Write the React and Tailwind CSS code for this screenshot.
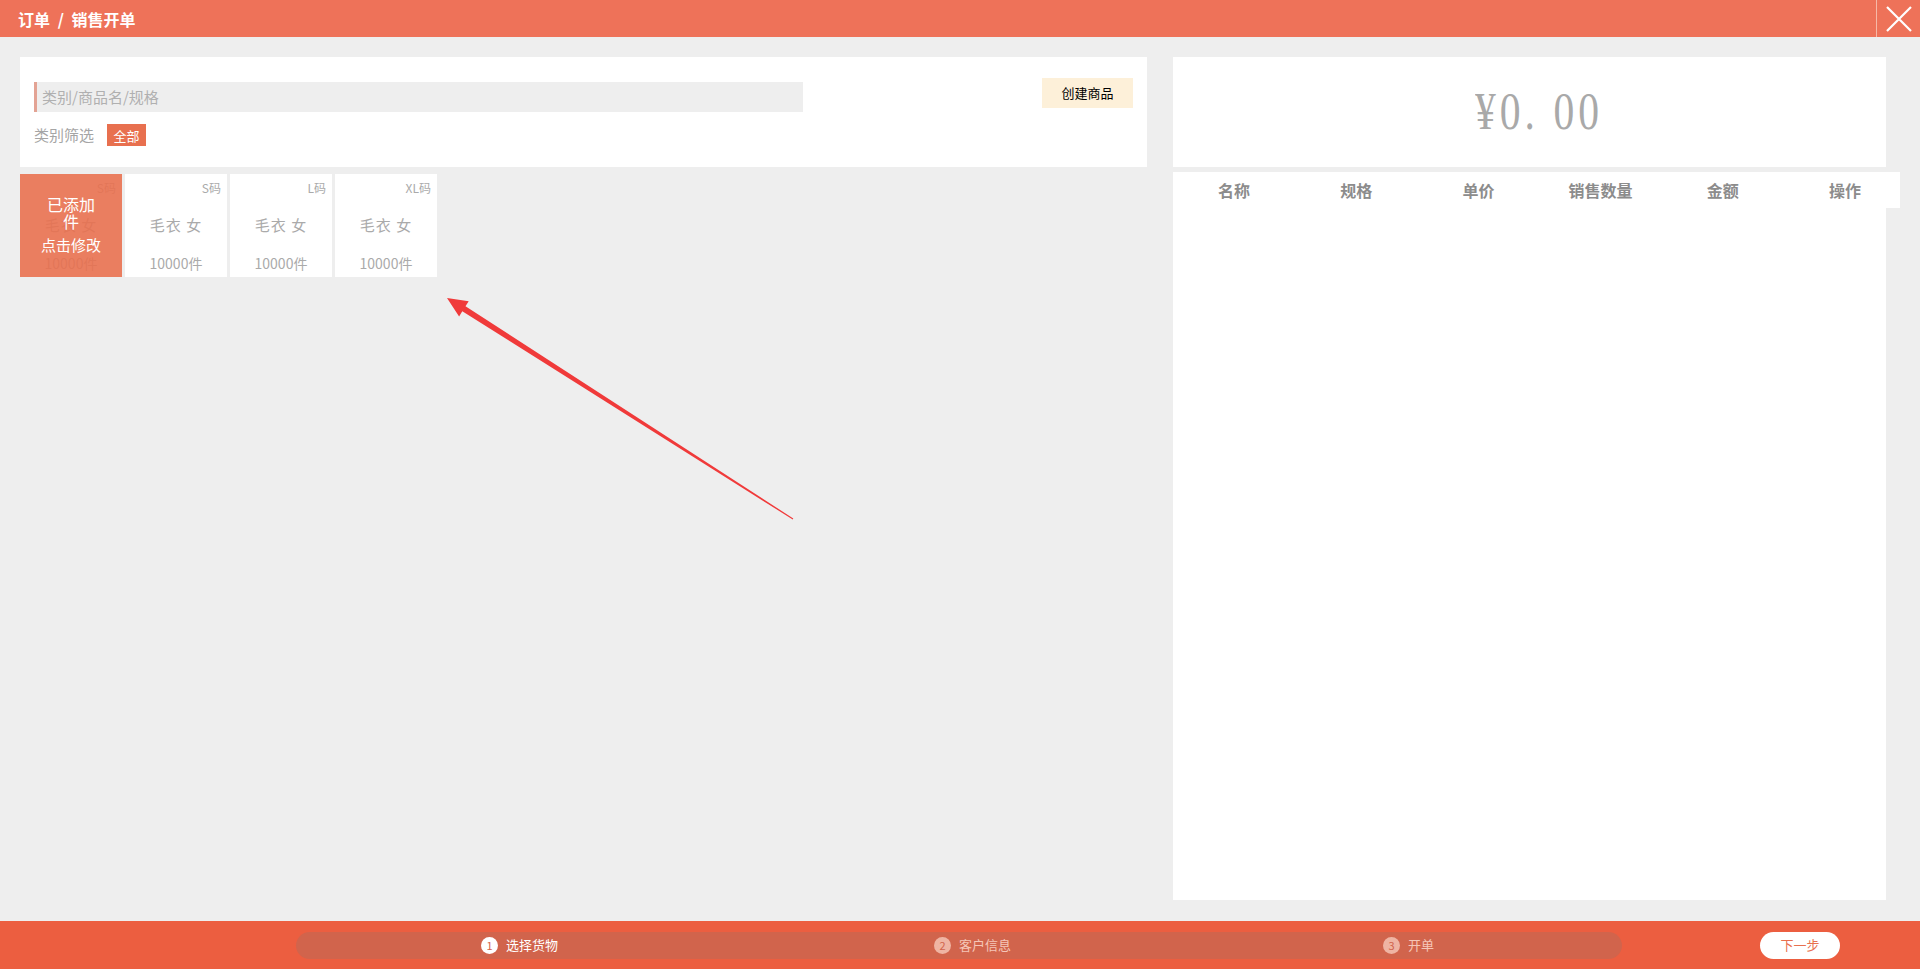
import React from "react";

const cards = [
  { size: "S码", name: "毛衣 女", stock: "10000件", added: true },
  { size: "S码", name: "毛衣 女", stock: "10000件" },
  { size: "L码", name: "毛衣 女", stock: "10000件" },
  { size: "XL码", name: "毛衣 女", stock: "10000件" },
];

const columns = ["名称", "规格", "单价", "销售数量", "金额", "操作"];

function ProductCard({ card }) {
  return (
    <div className="relative w-[102px] h-[103px] bg-white flex flex-col items-center text-[#aaaaaa]">
      <div className="self-end pr-[6px] pt-[6px] h-[20px] text-[12px] leading-[16px]">{card.size}</div>
      <div className="mt-[20px] text-[15px] leading-[22px] tracking-[1px]">{card.name}</div>
      <div className="mt-[17px] text-[14px] leading-[20px]">{card.stock}</div>
      {card.added && (
        <div className="absolute inset-0 bg-[#e8704f]/90 flex flex-col items-center justify-center text-white">
          <div className="text-[16px] leading-[17px] text-center">
            已添加
            <br />件
          </div>
          <div className="mt-[5px] text-[15px] leading-[20px]">点击修改</div>
        </div>
      )}
    </div>
  );
}

function Step({ num, label, active, className = "" }) {
  return (
    <div className={`flex items-center gap-[8px] ${className}`}>
      <span
        className={`w-[17px] h-[17px] rounded-full flex items-center justify-center text-[11px] leading-none ${
          active ? "bg-white text-[#d5644b]" : "bg-[#efb4a3] text-[#d1644c]"
        }`}
      >
        {num}
      </span>
      <span className={`text-[13px] ${active ? "text-white" : "text-[#f5c6b8]"}`}>{label}</span>
    </div>
  );
}

export default function App() {
  return (
    <div
      className="relative w-[1920px] h-[969px] bg-[#eeeeee] flex flex-col overflow-hidden"
      style={{ fontFamily: '"Noto Sans CJK SC", "Noto Sans", sans-serif' }}
    >
      {/* header */}
      <div className="h-[37px] bg-[#ee7259] flex items-center justify-between shrink-0">
        <div className="pl-[18px] text-white text-[16px] font-bold">
          订单 <span className="mx-[4px]">/</span> 销售开单
        </div>
        <div className="w-[44px] h-full border-l border-[#f6b9a8] flex items-center justify-center">
          <svg width="28" height="28" viewBox="0 0 28 28" fill="none" stroke="white" strokeWidth="2.2">
            <path d="M2 2 L26 26 M26 2 L2 26" />
          </svg>
        </div>
      </div>

      {/* main */}
      <div className="flex-1 flex pl-[20px] pt-[20px] pb-[21px] gap-[26px] min-h-0">
        {/* left */}
        <div className="w-[1127px] flex flex-col">
          <div className="h-[110px] bg-white px-[14px] pt-[21px]">
            <div className="flex items-start justify-between">
              <div className="mt-[4px] h-[30px] w-[769px] bg-[#eeeeee] border-l-[3px] border-[#e3a394] flex items-center pl-[5px] text-[15px] text-[#b0b0b0]">
                类别/商品名/规格
              </div>
              <button className="h-[30px] w-[91px] bg-[#fdf0d9] text-[13px] text-black">创建商品</button>
            </div>
            <div className="mt-[12px] flex items-center gap-[13px]">
              <span className="text-[15px] text-[#a5a5a5]">类别筛选</span>
              <span className="h-[22px] w-[39px] bg-[#e8704f] text-white text-[13px] flex items-center justify-center">
                全部
              </span>
            </div>
          </div>
          <div className="mt-[7px] flex gap-[3px]">
            {cards.map((c, i) => (
              <ProductCard key={i} card={c} />
            ))}
          </div>
        </div>

        {/* right */}
        <div className="w-[727px] flex flex-col">
          <div className="h-[110px] w-[713px] bg-white flex items-center justify-center">
            <span
              className="ml-[18px] inline-block scale-x-[0.8] text-[52px] leading-none tracking-[5px] text-[#a9a9a9]"
              style={{ fontFamily: '"Liberation Serif", serif' }}
            >
              ¥0.&nbsp;00
            </span>
          </div>
          <div className="mt-[5px] h-[36px] w-[727px] bg-white">
            <div className="w-[733px] h-full grid grid-cols-6 items-center text-center text-[16px] font-bold text-[#8c8c8c]">
              {columns.map((c) => (
                <div key={c}>{c}</div>
              ))}
            </div>
          </div>
          <div className="flex-1 w-[713px] bg-white" />
        </div>
      </div>

      {/* footer */}
      <div className="h-[48px] bg-[#ec5e40] flex items-center shrink-0">
        <div className="ml-[296px] w-[1326px] h-[27px] rounded-full bg-[#d1644c] flex items-center">
          <Step num="1" label="选择货物" active className="ml-[185px]" />
          <Step num="2" label="客户信息" className="ml-[376px]" />
          <Step num="3" label="开单" className="ml-[372px]" />
        </div>
        <button className="ml-[138px] w-[80px] h-[27px] rounded-full bg-white text-[13px] text-[#e8704f]">下一步</button>
      </div>

      {/* annotation arrow */}
      <svg className="absolute left-0 top-0 pointer-events-none" width="1920" height="969">
        <polygon
          fill="#f03a3a"
          points="447,298 468.7,301.2 465.5,306.3 793.3,518.5 792.7,519.5 462.3,311.3 459.1,316.4"
        />
      </svg>
    </div>
  );
}
